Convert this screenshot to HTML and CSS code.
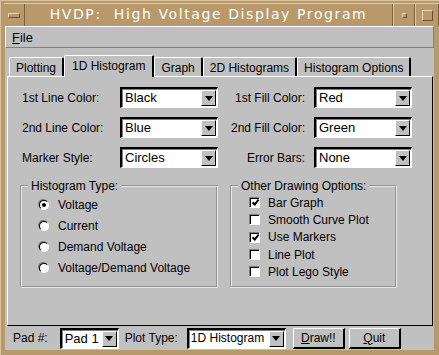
FILE: index.html
```html
<!DOCTYPE html>
<html lang="en">
<head>
    <meta charset="UTF-8">
    <title>HVDP: High Voltage Display Program</title>
    <link rel="stylesheet" href="styles.css">
</head>
<body>
    <div class="window">
        <div class="titlebar">
            <div class="wm-btn wm-menu"><span class="bar"></span></div>
            <div class="title">HVDP:&nbsp; High Voltage Display Program</div>
            <div class="wm-btn wm-min"><span class="dot"></span></div>
            <div class="wm-btn wm-max"><span class="box"></span></div>
        </div>

        <div class="client">
            <div class="menubar">
                <span class="menu-item"><u>F</u>ile</span>
            </div>

            <div class="notebook">
                <div class="tabs">
                    <div class="tab">Plotting</div>
                    <div class="tab active">1D Histogram</div>
                    <div class="tab">Graph</div>
                    <div class="tab">2D Histograms</div>
                    <div class="tab">Histogram Options</div>
                </div>

                <div class="panel">
                    <div class="form-grid">
                        <div class="label">1st Line Color:</div>
                        <div class="combo"><span class="value">Black</span><span class="arrow"></span></div>
                        <div class="label right">1st Fill Color:</div>
                        <div class="combo"><span class="value">Red</span><span class="arrow"></span></div>

                        <div class="label">2nd Line Color:</div>
                        <div class="combo"><span class="value">Blue</span><span class="arrow"></span></div>
                        <div class="label right">2nd Fill Color:</div>
                        <div class="combo"><span class="value">Green</span><span class="arrow"></span></div>

                        <div class="label">Marker Style:</div>
                        <div class="combo"><span class="value">Circles</span><span class="arrow"></span></div>
                        <div class="label right">Error Bars:</div>
                        <div class="combo"><span class="value">None</span><span class="arrow"></span></div>
                    </div>

                    <div class="groups">
                        <fieldset class="group group-type">
                            <legend>Histogram Type:</legend>
                            <div class="radio checked"><span class="knob"></span>Voltage</div>
                            <div class="radio"><span class="knob"></span>Current</div>
                            <div class="radio"><span class="knob"></span>Demand Voltage</div>
                            <div class="radio"><span class="knob"></span>Voltage/Demand Voltage</div>
                        </fieldset>

                        <fieldset class="group group-opts">
                            <legend>Other Drawing Options:</legend>
                            <div class="check checked"><span class="box"></span>Bar Graph</div>
                            <div class="check"><span class="box"></span>Smooth Curve Plot</div>
                            <div class="check checked"><span class="box"></span>Use Markers</div>
                            <div class="check"><span class="box"></span>Line Plot</div>
                            <div class="check"><span class="box"></span>Plot Lego Style</div>
                        </fieldset>
                    </div>
                </div>
            </div>

            <div class="bottombar">
                <span class="label label-pad">Pad #:</span>
                <div class="combo combo-pad"><span class="value">Pad 1</span><span class="arrow"></span></div>
                <span class="label label-plot">Plot Type:</span>
                <div class="combo combo-plot"><span class="value">1D Histogram</span><span class="arrow"></span></div>
                <button class="btn"><u>D</u>raw!!</button>
                <button class="btn"><u>Q</u>uit</button>
            </div>
        </div>
    </div>
</body>
</html>
```

FILE: styles.css
```css
body {
    margin: 0;
    font-family: "Liberation Sans", Arial, sans-serif;
    font-size: 12px;
    color: #000;
    background: #fff;
}
.window {
    width: 439px;
    height: 355px;
    box-sizing: border-box;
    background-color: #b8996b;
    border-top: 1px solid #d9c29c;
    border-left: 1px solid #d9c29c;
    display: flex;
    flex-direction: column;
}

/* title bar */
.titlebar {
    height: 23px;
    display: flex;
    border-top: 1px solid #e0cba8;
    margin: 2px 0 0 3px;
    box-sizing: border-box;
}
.wm-btn {
    width: 20px;
    display: flex;
    align-items: center;
    justify-content: center;
    border-left: 1px solid #e0cba8;
    border-right: 1px solid #7a5f3a;
}
.wm-menu {
    border-left: none;
}
.wm-menu .bar {
    width: 10px;
    height: 3px;
    border: 1px solid #e8d6b4;
    border-right-color: #6e5432;
    border-bottom-color: #6e5432;
}
.wm-min .dot {
    width: 3px;
    height: 3px;
    border: 1px solid #e8d6b4;
    border-right-color: #6e5432;
    border-bottom-color: #6e5432;
}
.wm-max {
    width: 22px;
}
.wm-max .box {
    width: 9px;
    height: 9px;
    border: 1px solid #e8d6b4;
    border-right-color: #6e5432;
    border-bottom-color: #6e5432;
}
.title {
    flex: 1;
    text-align: center;
    color: #fff;
    font-family: "DejaVu Sans", sans-serif;
    font-size: 14px;
    letter-spacing: 1.6px;
    line-height: 20px;
    border-right: 1px solid #7a5f3a;
}

/* client area */
.client {
    margin: 0 5px 5px 4px;
    flex: 1;
    background-color: #c0c0c0;
    display: flex;
    flex-direction: column;
}
.menubar {
    height: 22px;
    box-sizing: border-box;
    border-top: 1px solid #fff;
    border-left: 1px solid #fff;
    border-bottom: 1px solid #808080;
    border-right: 1px solid #808080;
    padding-left: 6px;
    display: flex;
    align-items: center;
}
.menu-item {
    font-size: 13px;
}

/* notebook */
.notebook {
    margin: 6px 1px 0 2px;
}
.tabs {
    display: flex;
    padding-left: 2px;
    height: 22px;
    align-items: flex-end;
}
.tab {
    height: 19px;
    line-height: 20px;
    padding: 0 6px;
    border-top: 1px solid #fff;
    border-left: 1px solid #fff;
    border-right: 2px solid #000;
    border-radius: 2px 2px 0 0;
    box-sizing: border-box;
    white-space: nowrap;
}
.tab.active {
    height: 22px;
    line-height: 20px;
    margin-bottom: -1px;
    padding: 0 7px;
    background-color: #c0c0c0;
    position: relative;
}
.panel {
    height: 250px;
    box-sizing: border-box;
    border-top: 1px solid #fff;
    border-left: 1px solid #fff;
    border-right: 1px solid #000;
    border-bottom: 1px solid #000;
    padding: 10px 0 0 14px;
}

/* form */
.form-grid {
    display: grid;
    grid-template-columns: 98px 98px 96px 98px;
    grid-auto-rows: 21px;
    row-gap: 9px;
    align-items: center;
}
.label {
    white-space: nowrap;
}
.label.right {
    text-align: right;
    padding-right: 9px;
}
.combo {
    height: 21px;
    box-sizing: border-box;
    display: flex;
    align-items: stretch;
    background: #fff;
    border-top: 2px solid #000;
    border-left: 2px solid #000;
    border-right: 1px solid #fff;
    border-bottom: 1px solid #fff;
    box-shadow: 1px 1px 0 #808080 inset;
}
.combo .value {
    flex: 1;
    padding-left: 3px;
    line-height: 17px;
    font-size: 13px;
    white-space: nowrap;
    overflow: hidden;
}
.combo .arrow {
    width: 15px;
    flex: none;
    margin: 1px;
    box-sizing: border-box;
    background: #c0c0c0;
    border-top: 1px solid #fff;
    border-left: 1px solid #fff;
    border-right: 1px solid #000;
    border-bottom: 1px solid #000;
    display: flex;
    align-items: center;
    justify-content: center;
}
.combo .arrow::after {
    content: "";
    border-left: 4px solid transparent;
    border-right: 4px solid transparent;
    border-top: 5px solid #000;
}

/* group boxes */
.groups {
    display: flex;
    gap: 12px;
    margin-top: 11px;
}
.group {
    margin: 0;
    padding: 1px 0 0 17px;
    border: 2px groove #e8e8e8;
    height: 109px;
    box-sizing: border-box;
}
.group legend {
    padding: 0 3px;
    margin-left: -11px;
}
.group-type {
    width: 198px;
    margin-left: -2px;
}
.group-opts {
    width: 167px;
    padding-left: 17px;
}
.radio {
    height: 21px;
    display: flex;
    align-items: center;
}
.radio .knob {
    width: 8px;
    height: 8px;
    border-radius: 50%;
    background: #fff;
    border: 1px solid #000;
    border-right-color: #fff;
    border-bottom-color: #fff;
    box-shadow: -1px -1px 0 #808080;
    margin-right: 9px;
    display: flex;
    align-items: center;
    justify-content: center;
}
.radio.checked .knob::after {
    content: "";
    width: 4px;
    height: 4px;
    border-radius: 50%;
    background: #000;
}
.check {
    height: 17.3px;
    display: flex;
    align-items: center;
}
.check .box {
    width: 9px;
    height: 9px;
    background: #fff;
    border-top: 1px solid #808080;
    border-left: 1px solid #808080;
    border-right: 1px solid #fff;
    border-bottom: 1px solid #fff;
    box-shadow: inset 1px 1px 0 #000;
    margin-right: 8px;
    display: flex;
    align-items: center;
    justify-content: center;
}
.check.checked .box::after {
    content: "";
    width: 2px;
    height: 5px;
    border-right: 2px solid #000;
    border-bottom: 2px solid #000;
    transform: rotate(40deg) translate(0, -1px);
}

/* bottom bar */
.bottombar {
    display: flex;
    align-items: center;
    height: 22px;
    margin-top: 1px;
    padding-left: 8px;
}
.label-pad {
    margin-right: 12px;
}
.label-plot {
    margin-right: 9px;
}
.combo-pad {
    width: 59px;
    margin-right: 6px;
}
.combo-plot {
    width: 99px;
    margin-right: 7px;
}
.combo-plot .value {
    padding-left: 2px;
    font-size: 12px;
}
.btn {
    width: 52px;
    height: 21px;
    margin-right: 4px;
    font-family: "Liberation Sans", Arial, sans-serif;
    font-size: 12px;
    color: #000;
    background: #c0c0c0;
    border-top: 1px solid #fff;
    border-left: 1px solid #fff;
    border-right: 2px solid #000;
    border-bottom: 2px solid #000;
    padding: 0;
}
```
